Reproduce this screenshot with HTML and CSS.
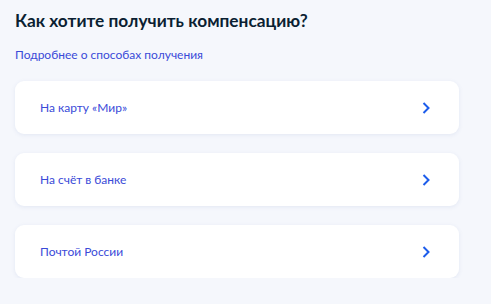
FILE: index.html
```html
<!DOCTYPE html>
<html lang="ru">
<head>
<meta charset="utf-8">
<link rel="stylesheet" href="styles.css">
</head>
<body>
<main class="page">
  <h1 class="title">Как хотите получить компенсацию?</h1>
  <a class="more" href="#">Подробнее о способах получения</a>
  <ul class="options">
    <li class="option"><span class="option-label">На карту «Мир»</span>
      <svg class="chevron" width="8" height="12" viewBox="0 0 8 12"><path d="M1.5 1 L6.5 6 L1.5 11" fill="none" stroke="#1d5deb" stroke-width="2"/></svg></li>
    <li class="option"><span class="option-label">На счёт в банке</span>
      <svg class="chevron" width="8" height="12" viewBox="0 0 8 12"><path d="M1.5 1 L6.5 6 L1.5 11" fill="none" stroke="#1d5deb" stroke-width="2"/></svg></li>
    <li class="option"><span class="option-label">Почтой России</span>
      <svg class="chevron" width="8" height="12" viewBox="0 0 8 12"><path d="M1.5 1 L6.5 6 L1.5 11" fill="none" stroke="#1d5deb" stroke-width="2"/></svg></li>
  </ul>
</main>
</body>
</html>
```

FILE: styles.css
```css
html, body {
  margin: 0;
  padding: 0;
  background: #f5f7fc;
  font-family: Lato, "Noto Sans", sans-serif;
}
.page {
  padding: 9px 32px 0 15px;
}
.title {
  margin: 0;
  font-size: 17.3px;
  line-height: 24px;
  font-weight: 700;
  color: #0b1f33;
}
.more {
  display: block;
  margin-top: 14px;
  font-size: 12px;
  line-height: 16px;
  color: #3a4ad8;
  text-decoration: none;
}
.options {
  list-style: none;
  margin: 18px 0 0;
  padding: 0;
  display: flex;
  flex-direction: column;
  gap: 19px;
}
.option {
  height: 53px;
  background: #fff;
  border-radius: 9px;
  box-shadow: 0 1px 4px rgba(100, 120, 180, 0.12);
  display: flex;
  align-items: center;
  justify-content: space-between;
  padding: 0 29px 0 25px;
}
.option-label {
  font-size: 12px;
  color: #3a4ad8;
}
.chevron {
  display: block;
}
```
